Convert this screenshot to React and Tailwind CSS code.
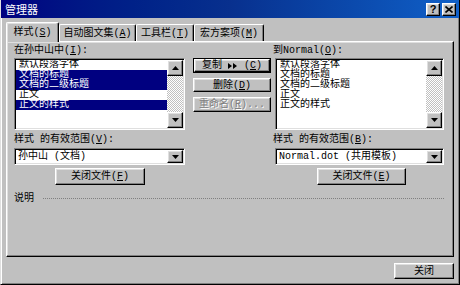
const raised =
  'border border-t-white border-l-white border-r-black border-b-black shadow-[inset_-1px_-1px_#808080,inset_1px_1px_#dfdfdf] bg-[#c0c0c0]'
const sunken =
  'border border-t-[#808080] border-l-[#808080] border-r-white border-b-white shadow-[inset_1px_1px_#000,inset_-1px_-1px_#dfdfdf]'

const Arrow = ({ dir }) => (
  <svg viewBox="0 0 7 4" className="w-[7px] h-[4px]">
    <path d={dir === 'up' ? 'M3.5 0L7 4H0Z' : 'M0 0H7L3.5 4Z'} fill="#000" />
  </svg>
)

function ScrollBar() {
  return (
    <div className="w-[16px] flex flex-col flex-shrink-0">
      <div className={`${raised} h-[16px] flex items-center justify-center`}><Arrow dir="up" /></div>
      <div className="flex-1 bg-[repeating-conic-gradient(#c0c0c0_0_25%,#fff_0_50%)] bg-[length:2px_2px]" />
      <div className={`${raised} h-[16px] flex items-center justify-center`}><Arrow dir="down" /></div>
    </div>
  )
}

function ListBox({ items, selected = [], className = '' }) {
  return (
    <div className={`${sunken} ${className} h-[72px] bg-white flex p-[1px]`}>
      <div className="flex-1 overflow-hidden">
        {items.map((it, i) => (
          <div
            key={i}
            className={`h-[10px] leading-[10px] pl-[3px] whitespace-nowrap ${selected.includes(i) ? 'bg-[#000080] text-white' : ''}`}
          >
            {it}
          </div>
        ))}
      </div>
      <ScrollBar />
    </div>
  )
}

function Combo({ value, className = '' }) {
  return (
    <div className={`${sunken} ${className} h-[17px] bg-white flex p-[1px]`}>
      <div className="flex-1 pl-[2px] flex items-center whitespace-nowrap overflow-hidden">{value}</div>
      <div className={`${raised} w-[16px] flex items-center justify-center`}><Arrow dir="down" /></div>
    </div>
  )
}

function Btn({ children, className = '', disabled }) {
  return (
    <div
      className={`${raised} ${className} flex items-center justify-center whitespace-nowrap ${disabled ? 'text-[#808080] [text-shadow:1px_1px_#fff]' : ''}`}
    >
      {children}
    </div>
  )
}

const styles = ['默认段落字体', '文档的标题', '文档的二级标题', '正文', '正文的样式']

export default function App() {
  return (
    <div className="w-[460px] h-[285px] bg-[#c0c0c0] border border-t-0 border-l-[#dfdfdf] border-r-black border-b-black shadow-[inset_1px_0_#fff,inset_-1px_-1px_#808080] px-[2px] flex flex-col overflow-hidden text-[10px] text-black font-['Liberation_Mono','Noto_Sans_CJK_SC',monospace]">
      {/* Title bar */}
      <div className="h-[18px] -mx-[2px] flex items-center bg-gradient-to-r from-[#000080] via-[#08308e] to-[#1060c8] pl-[4px] pr-[3px]">
        <span className="text-white text-[11px] font-['Noto_Sans_CJK_SC',sans-serif]">管理器</span>
        <div className="ml-auto flex gap-[2px]">
          <div className={`${raised} w-[14px] h-[13px] flex items-center justify-center text-[11px] font-bold leading-none font-['Liberation_Sans',sans-serif]`}>?</div>
          <div className={`${raised} w-[14px] h-[13px] flex items-center justify-center`}>
            <svg viewBox="0 0 8 7" className="w-[8px] h-[7px]">
              <path d="M0.5 0.5L7.5 6.5M7.5 0.5L0.5 6.5" stroke="#000" strokeWidth="1.6" />
            </svg>
          </div>
        </div>
      </div>

      {/* Tabs */}
      <div className="mt-[3px] ml-[3px] h-[20px] flex items-end relative z-10">
        <div className="w-[53px] h-[20px] -mb-[1px] bg-[#c0c0c0] border-l border-t border-l-white border-t-white border-r border-r-black shadow-[inset_-1px_0_#808080,inset_1px_1px_#dfdfdf] rounded-t-[2px] flex items-center justify-center">
          样式(<u>S</u>)
        </div>
        {[
          ['w-[77px]', '自动图文集', 'A'],
          ['w-[58px]', '工具栏', 'T'],
          ['w-[70px]', '宏方案项', 'M'],
        ].map(([w, t, k]) => (
          <div
            key={t}
            className={`${w} h-[17px] bg-[#c0c0c0] border-l border-t border-l-white border-t-white border-r border-r-black shadow-[inset_-1px_0_#808080] rounded-t-[2px] flex items-center justify-center`}
          >
            {t}(<u>{k}</u>)
          </div>
        ))}
      </div>

      {/* Panel */}
      <div className="mx-[3px] h-[216px] border border-t-white border-l-white border-r-black border-b-black shadow-[inset_-1px_-1px_#808080,inset_1px_1px_#dfdfdf] p-[1px] flex flex-col">
        <div className="flex pl-[6px]">
          {/* Left column */}
          <div className="w-[171px] flex flex-col">
            <div className="h-[15px] flex items-center">在孙中山中(<u>I</u>):</div>
            <ListBox items={styles} selected={[1, 2, 4]} />
            <div className="h-[18px] flex items-center">样式 的有效范围(<u>V</u>):</div>
            <Combo value="孙中山 (文档)" />
            <Btn className="mt-[3px] ml-[41px] w-[90px] h-[17px]">关闭文件(<u>F</u>)</Btn>
          </div>

          {/* Middle buttons */}
          <div className="w-[78px] ml-[8px] pt-[15px] flex flex-col">
            <div className="border border-black">
              <Btn className="h-[13px] gap-[6px]">
                <span>复制</span>
                <svg viewBox="0 0 10 6" className="w-[10px] h-[6px]">
                  <path d="M0 0L4 3L0 6ZM5 0L9 3L5 6Z" fill="#000" />
                </svg>
                <span>(<u>C</u>)</span>
              </Btn>
            </div>
            <Btn className="mt-[5px] h-[14px]">删除(<u>D</u>)</Btn>
            <Btn className="mt-[5px] h-[15px]" disabled>重命名(<u>R</u>)...</Btn>
          </div>

          {/* Right column */}
          <div className="w-[171px] ml-[2px] flex flex-col">
            <div className="h-[15px] flex items-center">到Normal(<u>O</u>):</div>
            <ListBox items={styles} className="ml-[2px] w-[169px]" />
            <div className="h-[18px] flex items-center">样式 的有效范围(<u>B</u>):</div>
            <Combo value="Normal.dot (共用模板)" className="ml-[2px] w-[169px]" />
            <Btn className="mt-[3px] ml-[44px] w-[89px] h-[17px]">关闭文件(<u>E</u>)</Btn>
          </div>
        </div>

        {/* Description */}
        <div className="mt-[6px] h-[14px] pl-[6px] pr-[8px] flex items-center">
          <span>说明</span>
          <div className="flex-1 ml-[9px] border-t border-dotted border-[#808080]" />
        </div>
      </div>

      {/* Bottom */}
      <div className="mt-[6px] mr-[3px] flex justify-end">
        <Btn className="w-[60px] h-[16px]">关闭</Btn>
      </div>
    </div>
  )
}
